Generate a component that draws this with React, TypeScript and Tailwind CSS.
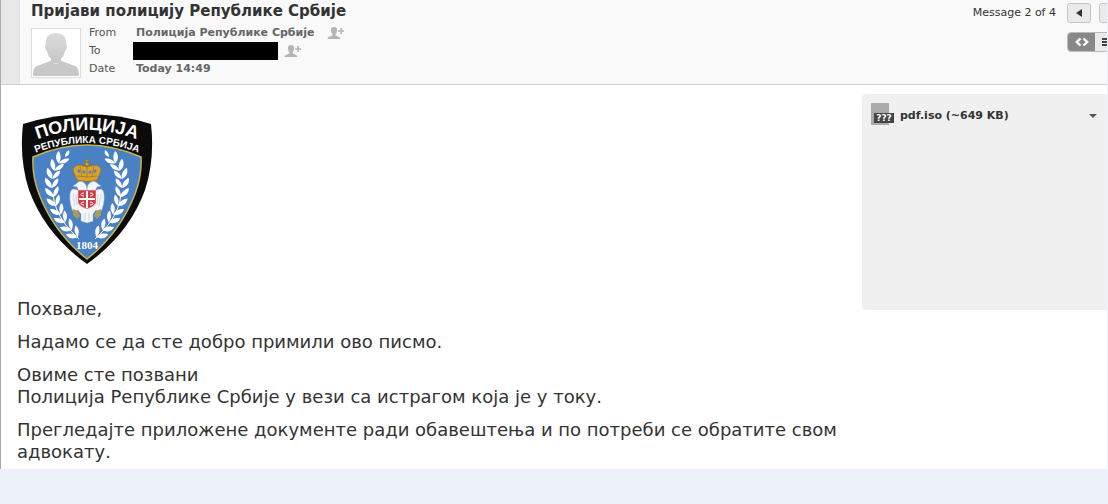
import type { ReactNode } from "react";

// centre line of the left half of the wreath, bottom to top
const WREATH = [
  [54, 120, -42],
  [48, 113, -42],
  [42, 105, -36],
  [38, 97, -28],
  [34, 88, -18],
  [32, 79, -8],
  [31, 70, 2],
  [32, 61, 12],
  [35, 53, 24],
  [40, 46, 36],
];

function WreathHalf() {
  return (
    <g fill="#fff">
      {WREATH.map(([x, y, angle]) => (
        <g key={y} transform={`translate(${x} ${y}) rotate(${angle})`}>
          <path d="M0 4C-5 3 -8 -1 -7 -6C-3 -4 0 -1 0 4Z" />
          <path d="M0 4C4 2 7 -1 6 -6C2 -4 0 -1 0 4Z" />
        </g>
      ))}
      <path d="M44 43q0-5 4-7q2 5-4 7z" />
      <path d="M58 125C46 114 34 100 32 80" fill="none" stroke="#fff" strokeWidth="1" />
    </g>
  );
}

function PoliceBadge() {
  return (
    <svg viewBox="0 0 132 150" className="h-[150px] w-[132px]" role="img" aria-label="Полиција Републике Србије">
      <defs>
        <path id="arc-top" d="M10 28Q66 4 122 28" />
        <path id="arc-sub" d="M9 41Q66 17 123 41" />
      </defs>
      <path d="M2 10Q66 -10 130 10Q134 45 124 76Q108 120 66 150Q24 120 8 76Q-2 45 2 10Z" fill="#0b0b0b" />
      <path
        d="M12 43Q66 19 120 43Q121 62 114 80Q99 119 66 145Q33 119 18 80Q11 62 12 43Z"
        fill="#4a80c4"
        stroke="#c9b64a"
        strokeWidth="1.5"
      />
      <text fill="#fff" className="font-['Liberation_Sans',sans-serif] text-[18px] font-bold">
        <textPath href="#arc-top" startOffset="50%" textAnchor="middle">ПОЛИЦИЈА</textPath>
      </text>
      <text fill="#fff" className="font-['Liberation_Sans',sans-serif] text-[10px] font-bold">
        <textPath href="#arc-sub" startOffset="50%" textAnchor="middle">РЕПУБЛИКА СРБИЈА</textPath>
      </text>

      <WreathHalf />
      <g transform="translate(132 0) scale(-1 1)">
        <WreathHalf />
      </g>

      {/* crown */}
      <g fill="#d9a130" stroke="#8c6a20" strokeWidth="0.6">
        <path d="M56 66L52 57Q52 51 59 51Q62 51 66 53Q70 51 73 51Q80 51 80 57L76 66Q66 69 56 66Z" />
        <path d="M61 53Q66 46 71 53" fill="none" />
        <path d="M56 62Q66 64 76 62M59 52L61 62M66 53V63M73 52L71 62" fill="none" />
        <circle cx="66" cy="50" r="2" />
        <path d="M65.400 45h1.200v1.200h1.200v1.200h-1.200v1.500h-1.200v-1.500h-1.200v-1.200h1.200z" />
      </g>
      <g fill="#4a80c4">
        <circle cx="58" cy="57" r="1.5" />
        <circle cx="63" cy="58" r="1.5" />
        <circle cx="69" cy="58" r="1.5" />
        <circle cx="74" cy="57" r="1.5" />
      </g>

      {/* double-headed eagle */}
      <path
        d="M66 76Q66 70 62 68Q58 66 55 70L52 72L56 73L58 77Q50 72 49 80Q48 91 53 99L57 96L60 100L60 107L66 109L72 107L72 100L75 96L79 99Q84 91 83 80Q82 72 74 77L76 73L80 72L77 70Q74 66 70 68Q66 70 66 76Z"
        fill="#f4f5f7"
        stroke="#aab4c2"
        strokeWidth="0.5"
      />
      <path d="M52 80l2 12M55 80l1 11M80 80l-2 12M77 80l-1 11M64 99v8M68 99v8" fill="none" stroke="#b9c2d0" strokeWidth="0.6" />
      <path d="M52 95l5 2l2 5l-3 3l-4-4zM80 95l-5 2l-2 5l3 3l4-4z" fill="#a89a5c" />
      <path d="M57 76H75V89Q73 93 66 95Q59 93 57 89Z" fill="#cf3b46" stroke="#f3e6e6" strokeWidth="0.5" />
      <path d="M65 77h2v7h7v2h-7v8h-2v-8h-7v-2h7z" fill="#fff" />
      <g fill="none" stroke="#fff" strokeWidth="1">
        <path d="M63 79q-3 0-3 1.500t3 1.500M69 79q3 0 3 1.500t-3 1.500" />
        <path d="M63 88q-3 0-3 1.500t3 1.500M69 88q3 0 3 1.500t-3 1.500" />
      </g>
      <text x="66" y="135" textAnchor="middle" fill="#fff" className="font-['Liberation_Serif',serif] text-[11px] font-bold">
        1804
      </text>
    </svg>
  );
}

function Avatar() {
  return (
    <svg viewBox="0 0 48 48" className="size-12" aria-hidden="true">
      <defs>
        <linearGradient id="silhouette" x1="0" y1="0" x2="0" y2="1">
          <stop offset="0" stopColor="#dcdcdc" />
          <stop offset="1" stopColor="#c6c6c6" />
        </linearGradient>
      </defs>
      <path
        d="M24 4C31 4 35 8 34 15C35.500 16 35 21 33 22C32 27 30 29 29 30V33Q24 36 19 33V30C18 29 16 27 15 22C13 21 12.500 16 14 15C13 8 17 4 24 4Z"
        fill="url(#silhouette)"
      />
      <path d="M1 47C1 39 3 37 8 36L18 32Q24 38 30 32L40 36C45 37 47 39 47 47Z" fill="#c8c8c8" />
    </svg>
  );
}

function AddContactButton() {
  return (
    <button type="button" aria-label="Add to address book" className="text-[#b4b4b4]">
      <svg viewBox="0 0 18 14" className="h-3.5 w-[18px]" fill="currentColor">
        <path d="M7 1C9.500 1 10.300 2.500 10 5C9.800 6.500 9.200 7.500 8.500 8V9.500L12 11Q13.500 11.500 13.500 13H0.500Q0.500 11.500 2 11L5.500 9.500V8C4.800 7.500 4.200 6.500 4 5C3.700 2.500 4.500 1 7 1Z" />
        <path d="M13.300 2h1.600v2.200h2.200v1.600h-2.200v2.200h-1.600v-2.200h-2.200v-1.600h2.200z" />
      </svg>
    </button>
  );
}

function HeaderRow({ label, children }: { label: string; children: ReactNode }) {
  return (
    <div className="flex h-[18px] items-center">
      <dt className="w-11 text-[#555]">{label}</dt>
      <dd className="flex items-center gap-1.5 font-bold text-[#666]">{children}</dd>
    </div>
  );
}

function MessageHeader() {
  return (
    <header className="flex overflow-hidden border-b border-[#d3d3d3] bg-[#f9f9f9]">
      <div className="w-[19px] shrink-0 border-r border-[#dfdfdf] bg-[#e8e8e8]" />
      <div className="min-w-0 flex-1 pb-1.5 pl-[11px] pt-0.5">
        <h1 className="text-[15px] font-bold leading-[18px] text-[#333]">Пријави полицију Републике Србије</h1>
        <div className="mt-1 flex gap-2">
          <div className="mt-1 size-[50px] shrink-0 border border-[#dedede] bg-white">
            <Avatar />
          </div>
          <dl className="text-[11px]">
            <HeaderRow label="From">
              <span className="min-w-[188px] pl-[3px]">Полиција Републике Србије</span>
              <AddContactButton />
            </HeaderRow>
            <HeaderRow label="To">
              <span className="h-[18px] w-[145px] bg-black" />
              <AddContactButton />
            </HeaderRow>
            <HeaderRow label="Date">
              <span className="pl-[3px]">Today 14:49</span>
            </HeaderRow>
          </dl>
        </div>
      </div>

      <div className="-mr-4 flex shrink-0 flex-col items-end gap-[9px] pt-[3px]">
        <div className="flex items-center gap-2">
          <span className="mr-[3px] text-[11px] leading-5 text-[#333]">Message 2 of 4</span>
          <button
            type="button"
            aria-label="Previous message"
            className="flex h-5 w-6 items-center justify-center rounded-[3px] border border-[#c4c4c4] bg-[#ebebeb]"
          >
            <svg viewBox="0 0 6 8" className="h-2 w-1.5" fill="#333">
              <path d="M6 0V8L0 4Z" />
            </svg>
          </button>
          <button
            type="button"
            aria-label="Next message"
            className="h-5 w-6 rounded-[3px] border border-[#c4c4c4] bg-[#ebebeb]"
          />
        </div>
        <div className="flex h-5 overflow-hidden rounded-[4px] border border-[#bababa]">
          <button type="button" aria-label="HTML view" className="flex w-[27px] items-center justify-center bg-[#888]">
            <svg viewBox="0 0 14 8" className="h-2 w-3.5" fill="none" stroke="#fff" strokeWidth="2.400">
              <path d="M5.500 0.500L1.800 4L5.500 7.500M8.500 0.500L12.200 4L8.500 7.500" />
            </svg>
          </button>
          <button type="button" aria-label="Plain text view" className="flex w-[27px] items-center bg-[#ebebeb] pl-[7px]">
            <svg viewBox="0 0 12 8" className="h-2 w-3" fill="#444">
              <path d="M0 0h12v2H0zM0 3h12v2H0zM0 6h12v2H0z" />
            </svg>
          </button>
        </div>
      </div>
    </header>
  );
}

function Attachments() {
  return (
    <aside className="mt-[9px] h-[216px] w-[245px] shrink-0 self-start rounded-l-[4px] bg-[#f0f0f0] pl-[9px] pr-2.5 pt-[9px]">
      <div className="flex h-[26px] items-center">
        <a href="#attachment" className="flex h-full items-center gap-1.5 text-[11px] font-bold text-[#333]">
          <svg viewBox="0 0 23 23" className="size-[23px] self-start" aria-hidden="true">
            <path d="M0 0H18V22H0Z" fill="#aaa" />
            <path d="M3 10H23V20H3Z" fill="#444" />
            <text x="13" y="18" textAnchor="middle" fill="#fff" className="text-[9px] font-bold">
              ???
            </text>
          </svg>
          pdf.iso (~649 KB)
        </a>
        <button type="button" aria-label="Attachment options" className="ml-auto">
          <svg viewBox="0 0 8 4" className="h-1 w-2" fill="#555">
            <path d="M0 0H8L4 4Z" />
          </svg>
        </button>
      </div>
    </aside>
  );
}

export default function App() {
  return (
    <div className="min-h-screen bg-[#edf2fa] font-['DejaVu_Sans',Verdana,sans-serif]">
      <main className="border-l border-r border-l-[#aaa] border-r-[#edf2fa] bg-white">
        <MessageHeader />
        <div className="flex">
          <article className="min-w-0 flex-1 space-y-[11px] pb-1.5 pl-4 pt-[29px] text-[18px] leading-[22px] text-[#333]">
            <div className="mb-[34px] pl-1">
              <PoliceBadge />
            </div>
            <p>Похвале,</p>
            <p>Надамо се да сте добро примили ово писмо.</p>
            <p>
              Овиме сте позвани
              <br />
              Полиција Републике Србије у вези са истрагом која је у току.
            </p>
            <p>Прегледајте приложене документе ради обавештења и по потреби се обратите свом адвокату.</p>
          </article>
          <Attachments />
        </div>
      </main>
    </div>
  );
}
